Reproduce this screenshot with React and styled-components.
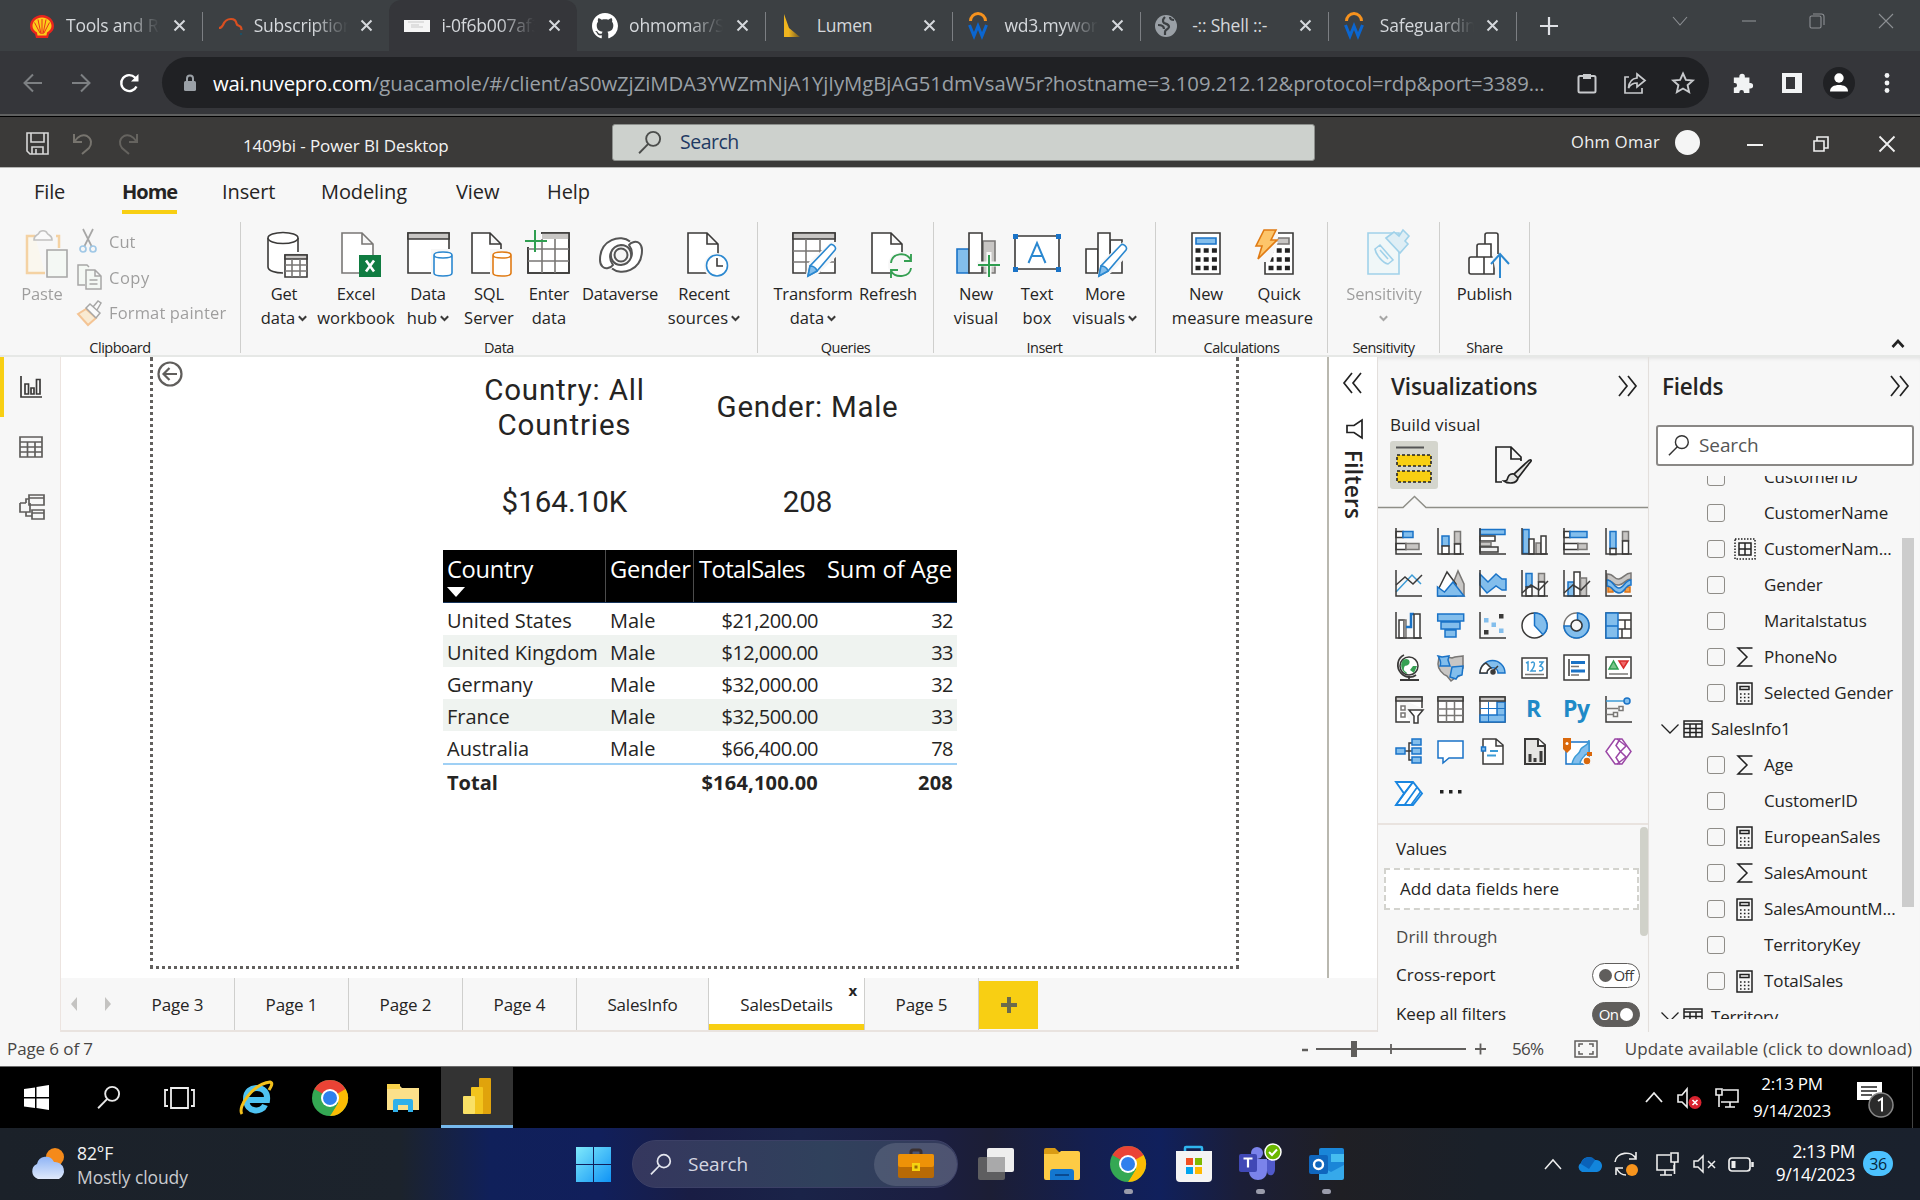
import React from "react";
import styled, { createGlobalStyle, css } from "styled-components";

const Global = createGlobalStyle`
  *, *::before, *::after { box-sizing: border-box; }
  html, body { margin: 0; padding: 0; }
  body { width: 1920px; height: 1200px; overflow: hidden; background: #000;
    font-family: "Open Sans", "Noto Sans", sans-serif; color: #252423; }
  svg { display: block; flex: none; overflow: visible; }
`;

const DARK = "#3b3a39";
const GREY = "#c8c6c4";
const MID = "#797775";
const BLUE = "#1a73c7";
const SKY = "#83beec";
const YELLOW = "#f8cf13";

const Screen = styled.div`
  width: 1920px; height: 1200px; display: flex; flex-direction: column; overflow: hidden;
`;

/* ---------- shared ---------- */
const Slot = styled.div`
  width: ${(p) => p.$w}px; flex: none; height: 100%;
  display: flex; align-items: center; justify-content: ${(p) => p.$align || "center"};
  padding-left: ${(p) => p.$pl || 0}px; padding-top: ${(p) => p.$pt || 0}px;
`;
const Label = styled.span`
  font-size: ${(p) => p.$size || 17}px; letter-spacing: ${(p) => p.$ls ?? -0.3}px;
  color: ${(p) => p.$color || "#252423"}; font-weight: ${(p) => p.$weight || 400};
  white-space: pre; line-height: 1.3;
`;

/* ---------- browser ---------- */
const TabStrip = styled.div`
  height: 51px; background: #3c4043; display: flex; padding-left: 14px; flex: none;
`;
const BrowserTab = styled.div`
  width: 187.7px; height: 51px; flex: none; display: flex; align-items: center; padding-left: 15px;
  border-radius: 12px 12px 0 0; position: relative;
  background: ${(p) => (p.$active ? "#35363a" : "transparent")};
  &::after { content: ""; position: absolute; right: -1px; top: 12px; width: 1px; height: 29px;
    background: ${(p) => (p.$sep ? "#7c7f83" : "transparent")}; }
`;
const TabIcon = styled.div`width: 26px; height: 26px; flex: none;`;
const TabTitle = styled.div`
  margin-left: 11px; width: 94px; flex: none; overflow: hidden; white-space: nowrap; margin-top: -1px;
  font-size: 17.5px; letter-spacing: -0.2px; color: #d5d8dc;
  mask-image: ${(p) => (p.$fade ? "linear-gradient(90deg,#000 62%,transparent 100%)" : "none")};
`;
const TabClose = styled.div`width: 30px; display: flex; justify-content: center; margin-left: 4px;`;
const Spacer = styled.div`flex: 1;`;

const Toolbar = styled.div`
  height: 63px; background: #35363a; display: flex; align-items: center; padding-left: 9px; flex: none;
`;
const UrlBar = styled.div`
  width: 1547px; height: 51px; border-radius: 26px; background: #202124; margin-left: 9px; flex: none;
  display: flex; align-items: center;
`;
const UrlText = styled.div`
  width: 1350px; font-size: 20.3px; letter-spacing: -0.07px; color: #9aa0a6; white-space: nowrap;
  b { font-weight: 400; color: #fff; letter-spacing: -0.25px; }
`;
const Edge = styled.div`height: 3px; background: #5f6060; border-bottom: 1px solid #000; flex: none;`;

/* ---------- report window ---------- */
const TitleBar = styled.div`
  height: 51px; flex: none; background: #3b3a39; border-bottom: 1px solid #b5b5b4; display: flex; align-items: center;
`;
const TitleSearch = styled.div`
  width: 703px; height: 37px; flex: none; background: #cdd1cd; border: 1px solid #8c8f8c; border-radius: 3px;
  display: flex; align-items: center; padding-left: 24px; gap: 18px;
`;
const Ribbon = styled.div`
  height: 189px; flex: none; background: #f7f7f7; border-bottom: 2px solid #e6e8e6; display: flex; flex-direction: column;
`;
const RibbonTabs = styled.div`height: 54px; display: flex; padding-left: 34px; flex: none;`;
const RibbonTab = styled.div`
  width: ${(p) => p.$w}px; flex: none;
  span { display: inline-block; height: 46px; padding-top: 10px; font-size: 20px; line-height: 28px;
    letter-spacing: ${(p) => p.$ls || 0}px; font-weight: ${(p) => (p.$on ? 700 : 400)};
    border-bottom: ${(p) => (p.$on ? `4px solid ${YELLOW}` : "none")}; }
`;
const RibbonBody = styled.div`display: flex; height: 131px; flex: none;`;
const Group = styled.div`
  width: ${(p) => p.$w}px; flex: none; border-right: 1px solid #cfcfcd; display: flex; flex-direction: column;
`;
const GroupItems = styled.div`display: flex; height: 116px; flex: none; padding-left: ${(p) => p.$pl}px;`;
const GroupName = styled.div`
  text-align: center; font-size: 14.5px; letter-spacing: -0.5px; line-height: 20px; height: 15px; color: #252423;
`;
const Command = styled.div`
  width: ${(p) => p.$w}px; flex: none; display: flex; flex-direction: column; align-items: center; padding-top: 8px;
  opacity: ${(p) => (p.$off ? 0.42 : 1)};
`;
const CommandText = styled.div`
  margin-top: 4px; font-size: 16.5px; line-height: 24px; letter-spacing: -0.15px; white-space: nowrap;
  display: flex; flex-direction: column; align-items: center; color: #252423;
  div { display: flex; align-items: center; gap: 3px; height: 24px; }
  div + div { letter-spacing: 0.1px; }
`;
const ClipRows = styled.div`display: flex; flex-direction: column; padding-top: 2px; opacity: 0.42;`;
const ClipRow = styled.div`
  height: 35.6px; display: flex; align-items: center; gap: 7px; font-size: 16.5px; letter-spacing: ${(p) => p.$ls || 0}px; white-space: nowrap;
`;

const Work = styled.div`height: 675px; flex: none; display: flex; background: #f7f7f7;`;
const Rail = styled.div`
  width: 61px; flex: none; border-right: 1px solid #ece4e0; display: flex; flex-direction: column;
`;
const RailItem = styled.div`
  height: 60px; display: flex; align-items: center; padding-left: ${(p) => (p.$on ? 16 : 19)}px;
  border-left: ${(p) => (p.$on ? `4px solid ${YELLOW}` : "none")};
`;
const Center = styled.div`width: 1317px; flex: none; display: flex; flex-direction: column; border-right: 1px solid #e3dfdc;`;
const CanvasRow = styled.div`height: 621px; display: flex; background: #fff; flex: none;`;
const Canvas = styled.div`width: 1268px; flex: none; border-right: 2px solid #b9b8af; padding-left: 89px;`;
const Page = styled.div`
  width: 1089px; height: 612px; border: 3px dotted #62605e; border-top: none; position: relative; padding-left: 290px;
`;
const BackButton = styled.div`position: absolute; left: 4px; top: 4px;`;
const Cards = styled.div`display: grid; grid-template-columns: 243px 243px; grid-template-rows: 101px 89px;`;
const Card = styled.div`
  display: flex; align-items: center; justify-content: center; text-align: center;
  font-family: Roboto, sans-serif; font-size: 29.5px; line-height: 34.5px; letter-spacing: ${(p) => p.$ls || 0}px; color: #252423; white-space: pre;
`;
const Table = styled.div`width: 514px; margin-top: 3px;`;
const Cells = styled.div`
  display: grid; grid-template-columns: 163px 88px 128px 135px; white-space: nowrap;
`;
const Head = styled(Cells)`
  height: 53px; background: #000; border-bottom: 1px solid #17355c; color: #fff; font-size: 23.7px; letter-spacing: -0.3px;
  > div { padding: 2px 5px 0 4px; line-height: 34px; border-right: 1px solid #4c4c4c; }
  > div:nth-child(3), > div:nth-child(4) { border-right: none; }
  > div:nth-child(3) { padding-left: 5px; letter-spacing: -0.55px; }
  > div:nth-child(4) { text-align: right; letter-spacing: 0; }
  svg { margin-top: 1px; }
`;
const Row = styled(Cells)`
  height: 32.1px; background: ${(p) => (p.$alt ? "#eff3f0" : "#fff")}; font-size: 20px; letter-spacing: 0;
  font-weight: ${(p) => (p.$total ? 700 : 400)};
  border-top: ${(p) => (p.$total ? "2px solid #9fd0f5" : "none")};
  > div { padding: 3px 4px 0; line-height: 29px; }
  > div:nth-child(n+3) { text-align: right; letter-spacing: ${(p) => (p.$total ? "0.2px" : "-0.55px")}; }
`;
const FiltersPane = styled.div`width: 49px; display: flex; flex-direction: column; align-items: center; padding-top: 15px;`;
const Funnel = styled.div`margin: 25px 0 0 3px;`;
const VerticalText = styled.div`
  writing-mode: vertical-rl; font-size: 22.5px; line-height: 24px; font-weight: 600; margin-top: 11px; letter-spacing: 0.3px;
`;

const PageTabs = styled.div`height: 54px; display: flex; border-bottom: 2px solid #e9e3df; flex: none;`;
const PageTab = styled.div`
  width: ${(p) => p.$w}px; flex: none; display: flex; align-items: center; justify-content: center; position: relative;
  border-right: 1px solid #cfcfcd; font-size: 17px; letter-spacing: ${(p) => p.$ls ?? -0.35}px;
  ${(p) => p.$on && css`background: #fff; box-shadow: inset 0 -6px ${YELLOW};`}
  sup { position: absolute; right: 7px; top: 3px; font-size: 15px; font-weight: 700; line-height: 18px; }
`;
const AddPage = styled.div`
  width: 59px; height: 48px; margin-top: 3px; background: ${YELLOW}; display: flex; align-items: center; justify-content: center;
`;

const Viz = styled.div`width: 271px; flex: none; border-right: 1px solid #e3dfdc; display: flex; flex-direction: column; box-shadow: inset 0 4px 4px -3px #ddd;`;
const PaneTitle = styled.div`
  height: 46px; margin-top: 6px; display: flex; align-items: center; justify-content: space-between; padding: 0 10px 0 13px;
  font-size: 22.5px; font-weight: 600; letter-spacing: -0.2px; flex: none;
`;
const Modes = styled.div`display: flex; gap: 52px; padding-left: 12px; height: 55px; flex: none;`;
const Mode = styled.div`
  width: 48px; height: 48px; border-radius: 3px; display: flex; align-items: center; justify-content: center;
  background: ${(p) => (p.$on ? "#d4d5cd" : "transparent")};
`;
const IconGrid = styled.div`
  display: grid; grid-template-columns: repeat(6, 42px); grid-auto-rows: 42px; padding: 20px 0 0 17px; height: 315px; flex: none;
`;
const Wells = styled.div`
  height: 208px; border-top: 2px solid #e9e3df; flex: none; display: flex; overflow: hidden;
`;
const WellList = styled.div`width: 262px; padding-left: 6px; display: flex; flex-direction: column;`;
const WellRow = styled.div`
  height: ${(p) => p.$h}px; display: flex; align-items: center; justify-content: space-between; padding-left: 12px; flex: none;
  padding-top: ${(p) => p.$pt || 0}px;
`;
const Drop = styled.div`
  height: 42px; width: 255px; background: #fff; border: 2px dashed #d3d3ce; display: flex; align-items: center; padding-left: 14px; flex: none;
`;
const Thumb = styled.div`width: ${(p) => p.$w}px; height: ${(p) => p.$h}px; background: ${(p) => p.$c}; border-radius: ${(p) => p.$r || 0}px; margin-top: ${(p) => p.$mt}px;`;
const Toggle = styled.div`
  width: 48px; height: 25px; border-radius: 13px; border: 1.5px solid #605e5c; display: flex; align-items: center; justify-content: center; gap: 2px;
  background: ${(p) => (p.$on ? "#605e5c" : "#fff")}; color: ${(p) => (p.$on ? "#fff" : "#3b3a39")};
  flex-direction: ${(p) => (p.$on ? "row" : "row-reverse")}; font-size: 15px; letter-spacing: -0.6px;
  i { width: 13px; height: 13px; border-radius: 50%; background: ${(p) => (p.$on ? "#fff" : "#605e5c")}; }
`;

const Fields = styled.div`width: 271px; flex: none; display: flex; flex-direction: column; box-shadow: inset 0 4px 4px -3px #ddd;`;
const FieldSearch = styled.div`
  width: 258px; height: 41px; margin: 16px 0 0 7px; border: 2px solid #8a8886; border-radius: 3px; background: #fff; flex: none;
  display: flex; align-items: center; padding-left: 9px; gap: 9px;
`;
const FieldArea = styled.div`height: 543px; margin-top: 10px; display: flex; overflow: hidden; flex: none;`;
const FieldList = styled.div`width: 253px; display: flex; flex-direction: column; margin-top: -17px; flex: none;`;
const FieldRow = styled.div`height: 36px; flex: none; display: flex; align-items: center; padding-left: ${(p) => (p.$table ? 12 : 58)}px;`;
const Check = styled.div`width: 18px; height: 18px; border: 1.5px solid #8f8d88; border-radius: 3px; flex: none;`;
const FieldIcon = styled.div`width: 39px; display: flex; justify-content: center; padding-right: 0; flex: none;`;

const Status = styled.div`
  height: 35px; flex: none; background: #f7f7f7; border-bottom: 1px solid #6b6b6b; display: flex; align-items: center; padding: 0 8px 0 7px;
`;

/* ---------- taskbars ---------- */
const RemoteBar = styled.div`height: 61px; flex: none; background: #000; display: flex; align-items: center;`;
const AppTile = styled.div`
  width: 72px; height: 61px; flex: none; display: flex; align-items: center; justify-content: center;
  background: ${(p) => (p.$on ? "#333" : "transparent")}; border-bottom: ${(p) => (p.$on ? "3px solid #76b9ed" : "3px solid transparent")};
`;
const Clock = styled.div`
  width: ${(p) => p.$w}px; flex: none; text-align: ${(p) => p.$align}; color: #fff; font-size: ${(p) => p.$size}px; line-height: ${(p) => p.$lh}px;
  letter-spacing: ${(p) => p.$ls}px; white-space: nowrap; margin-top: -2px;
`;
const HostBar = styled.div`
  height: 72px; flex: none; display: flex; align-items: center;
  background: linear-gradient(90deg, #1b2129 0, #1c232c 400px, #10205a 490px, #111f5b 600px, #191d44 690px, #1a2348 800px, #1b1e40 940px, #1c1e35 990px, #141f50 1090px, #10205c 1160px, #1b1e38 1240px, #1f1f24 1340px, #1a2029 1480px, #1a212d 100%);
`;
const Weather = styled.div`width: 541px; display: flex; align-items: center; gap: 11px; flex: none;`;
const WeatherText = styled.div`color: #f3f3f3; font-size: 17.5px; line-height: 24px; letter-spacing: -0.1px; margin-top: 2px; div + div { color: #c9cbcf; }`;
const SearchPill = styled.div`
  width: 326px; height: 48px; border-radius: 24px; flex: none; margin: 0 5px 0 17px; display: flex; align-items: center;
  background: linear-gradient(90deg, #35375e, #30415c 60%, #343a5c); border: 1px solid #3c4066; padding-left: 16px;
`;
const Highlight = styled.div`
  width: 84px; height: 43px; border-radius: 22px; background: rgba(255,255,255,.13); display: flex; align-items: center; justify-content: center;
`;
const HostApp = styled.div`
  width: 66px; height: 72px; flex: none; display: flex; flex-direction: column; align-items: center; justify-content: center; position: relative;
  &::after { content: ""; position: absolute; bottom: 6px; width: 9px; height: 5px; border-radius: 3px; background: ${(p) => (p.$run ? "#9a9cab" : "transparent")}; }
`;
const Count = styled.div`
  width: 30px; height: 25px; border-radius: 13px; background: #4cc2ff; color: #06263a; font-size: 16px; letter-spacing: -0.4px;
  display: flex; align-items: center; justify-content: center; margin: -1px 0 0 8px;
`;

/* ---------- drawing helper ---------- */
const S = ({ w = 24, h, vb, c = "none", s = "none", sw = 1.5, children }) => (
  <svg width={w} height={h || w} viewBox={vb || `0 0 ${w} ${h || w}`} fill={c} stroke={s} strokeWidth={sw}>{children}</svg>
);
const X = ({ n = 11, s = "#d5d8dc", sw = 2 }) => <S w={n} s={s} sw={sw}><path d={`M0.5 0.5L${n - 0.5} ${n - 0.5}M${n - 0.5} 0.5L0.5 ${n - 0.5}`} /></S>;
const Lens = ({ n = 24, s = "#444", sw = 1.8 }) => <S w={n} vb="0 0 24 24" s={s} sw={sw}><circle cx="15.5" cy="8.5" r="6.7" /><path d="M10.8 13.3L2 22.3" /></S>;
const Down = ({ s = DARK }) => <S w={9} h={7} s={s} sw={2}><path d="M0.8 1.2L4.5 5L8.2 1.2" /></S>;

/* ---------- browser icons ---------- */
const ShellLogo = () => <S w={26}><path d="M13 2C20 2 25 7 25 13c0 4-2 6-5 8l-1 4H7l-1-4c-3-2-5-4-5-8C1 7 6 2 13 2z" fill="#e8251d" /><path d="M13 4.500c5.500 0 9.500 4 9.500 8.500 0 3-2 5-4.500 6.500l-.5 3h-9l-.5-3C5.500 18 3.500 16 3.500 13c0-4.500 4-8.500 9.500-8.500z" fill="#fccb1a" /><path d="M13 6v15M9 6.500l3 14.500M17 6.500L14 21M5.500 9.500L11 20M20.500 9.500L15 20" stroke="#e8251d" strokeWidth=".9" /></S>;
const Arc = () => <S w={26} s="#d94f20" sw={2.200}><path d="M2 15c2 0 3-1 4-3 1.500-4 4-6 8-6 3 0 5 1.500 5.500 4.500.3 2 1.500 2 3 2.500 1.500.5 2 1.500 2 4" /><path d="M24 20v2" stroke="#1d5065" /></S>;
const Remote = () => <S w={26}><rect x="0" y="7" width="26" height="12" fill="#f5f5f5" /><path d="M7 12h8M7 14h12M4 9h16" stroke="#c9c9c9" strokeWidth="1" /></S>;
const GitHub = () => <S w={26} vb="0 0 16 16" c="#fff"><path d="M8 0C3.580 0 0 3.580 0 8c0 3.540 2.290 6.530 5.470 7.590.4.070.55-.17.55-.38 0-.19-.01-.82-.01-1.490-2.010.37-2.530-.49-2.690-.94-.09-.23-.48-.94-.82-1.130-.28-.15-.68-.52-.01-.53.63-.01 1.080.58 1.230.82.72 1.210 1.870.87 2.330.66.070-.52.28-.87.51-1.070-1.780-.2-3.640-.89-3.640-3.950 0-.87.31-1.590.82-2.150-.08-.2-.36-1.020.08-2.120 0 0 .67-.21 2.200.82.64-.18 1.320-.27 2-.27s1.360.09 2 .27c1.530-1.040 2.200-.82 2.200-.82.44 1.100.16 1.920.08 2.120.51.56.82 1.270.82 2.150 0 3.070-1.870 3.750-3.650 3.950.29.25.54.73.54 1.480 0 1.070-.01 1.930-.01 2.200 0 .21.15.46.55.38A8.010 8.010 0 0016 8c0-4.420-3.580-8-8-8z" /></S>;
const LumenLogo = () => <S w={26}><defs><linearGradient id="lum"><stop offset=".3" stopColor="#f0b51e" /><stop offset="1" stopColor="#6b5523" /></linearGradient></defs><path d="M4 1l5 14 11 9H4z" fill="url(#lum)" /></S>;
const Workday = () => <S w={22} h={26}><path d="M3.500 8a7.500 7.500 0 0115 0" stroke="#f6921e" strokeWidth="3" /><path d="M2.500 12L7 23l4-10 4 10 4.500-11" stroke="#0b66d0" strokeWidth="3" /></S>;
const Globe = () => <S w={24} h={26}><circle cx="11" cy="13" r="11" fill="#9aa0a6" /><path d="M10 4c-2 2-3 4-1 6 2 1 5 1 5 4-1 3-4 2-4 5v3M3 12c3 0 6 1 6 4M15 4c0 2 1 3 4 3" stroke="#3c4043" strokeWidth="2.200" /></S>;

const tabs = [
  [<ShellLogo />, "Tools and Resources", 1, 1], [<Arc />, "Subscriptions", 1, 0], [<Remote />, "i-0f6b007af3", 1, 0],
  [<GitHub />, "ohmomar/Shell", 1, 1], [<LumenLogo />, "Lumen", 0, 1], [<Workday />, "wd3.myworkday", 1, 1],
  [<Globe />, "-:: Shell ::-", 0, 1], [<Workday />, "Safeguarding", 1, 1],
];

function Browser() {
  return (
    <>
      <TabStrip>
        {tabs.map(([icon, title, fade, sep], i) => (
          <BrowserTab key={i} $active={i === 2} $sep={sep}>
            <TabIcon>{icon}</TabIcon><TabTitle $fade={fade}>{title}</TabTitle><TabClose><X /></TabClose>
          </BrowserTab>
        ))}
        <Slot $w={66}><S w={18} s="#dfe1e5" sw={2.200}><path d="M9 0v18M0 9h18" /></S></Slot>
        <Spacer />
        {[<path d="M1 4l7 8 7-8" />, <path d="M1 8h14" />, <path d="M1 4.500a1.500 1.500 0 011.500-1.500h8A1.500 1.500 0 0112 4.500v9a1.500 1.500 0 01-1.500 1.500h-8A1.500 1.500 0 011 13.500zM4 1h8.500A2.500 2.500 0 0115 3.500V12" />, <path d="M1 1l14 14M15 1L1 15" />].map((d, i) => (
          <Slot key={i} $w={68.500}><S w={16} h={25} s="#8d9094" sw={1.100}>{d}</S></Slot>
        ))}
      </TabStrip>
      <Toolbar>
        <Slot $w={48}><S w={20} s="#7d8083" sw={2}><path d="M19 10H2M10 1.500L1.500 10l8.500 8.500" /></S></Slot>
        <Slot $w={48}><S w={20} s="#7d8083" sw={2}><path d="M1 10h17M10 1.500l8.500 8.500-8.500 8.500" /></S></Slot>
        <Slot $w={48}><S w={20} s="#fff" sw={2.400}><path d="M17.500 13.500A8 8 0 1116 4.500L18 7" /><path d="M19.500 1v7.500h-7.500z" fill="#fff" stroke="none" /></S></Slot>
        <UrlBar>
          <Slot $w={51} $pl={4}><S w={14} h={18}><rect x="1" y="7" width="12" height="10" rx="1.500" fill="#9aa0a6" /><path d="M4 7V4.500a3 3 0 016 0V7" stroke="#9aa0a6" strokeWidth="2" /></S></Slot>
          <UrlText><b>wai.nuvepro.com</b>/guacamole/#/client/aS0wZjZiMDA3YWZmNjA1YjIyMgBjAG51dmVsaW5r?hostname=3.109.212.12&amp;protocol=rdp&amp;port=3389...</UrlText>
          <Slot $w={48}><S w={20} h={22} s="#c8cacd" sw={2}><rect x="1.500" y="4" width="17" height="16.500" rx="1.500" /><path d="M6 2h8v5H6z" fill="#c8cacd" stroke="none" /></S></Slot>
          <Slot $w={48}><S w={24} h={22} s="#c8cacd" sw={1.700}><path d="M6 5H2v16h17v-5" /><path d="M14 2l8 6.500L14 15v-4c-4 0-6.500 1.500-8.500 5 .5-6 3.500-9.500 8.500-10z" /></S></Slot>
          <Slot $w={48}><S w={22} s="#c8cacd" sw={1.900}><path d="M11 1.500l2.900 6.400 6.900.7-5.200 4.600 1.500 6.800-6.100-3.500L4.900 20l1.500-6.800L1.200 8.600l6.900-.7z" /></S></Slot>
        </UrlBar>
        <Slot $w={67}><S w={22} vb="0 0 24 24" c="#f1f3f4"><path d="M2 6h6V5a3 3 0 016 0v1h5v6h1a3 3 0 010 6h-1v5h-6v-1a2.500 2.500 0 00-5 0v1H2v-6h1a2.500 2.500 0 000-5H2z" /></S></Slot>
        <Slot $w={31}><S w={22}><path d="M1 1h20v20H1zM5 5v12h9V5z" fill="#f1f3f4" fillRule="evenodd" /></S></Slot>
        <Slot $w={64}><S w={32}><circle cx="16" cy="16" r="16" fill="#202124" /><circle cx="16" cy="11" r="4.700" fill="#fff" /><path d="M7 24.500c0-4.500 4-6.500 9-6.500s9 2 9 6.500z" fill="#fff" /></S></Slot>
        <Slot $w={32}><S w={6} h={20} c="#f1f3f4"><circle cx="3" cy="2.500" r="2.400" /><circle cx="3" cy="10" r="2.400" /><circle cx="3" cy="17.500" r="2.400" /></S></Slot>
      </Toolbar>
      <Edge />
    </>
  );
}

function TitleStrip() {
  return (
    <TitleBar>
      <Slot $w={75} $pt={3}><S w={23} s="#d8d8d8" sw={1.600}><path d="M1 1h21v21H4l-3-3z" /><path d="M5 1v9h13V1M6 22v-7h11v7M10 17v5" /></S></Slot>
      <Slot $w={15} $pt={3}><S w={20} h={22} s="#77746e" sw={2}><path d="M1 1v8h8M1.500 8.500C5 3 10 1 14 3c5 3 5 8 2 12l-7 6" /></S></Slot>
      <Slot $w={75} $pt={3}><S w={20} h={22} s="#65635f" sw={2}><path d="M19 1v8h-8M18.500 8.500C15 3 10 1 6 3 1 6 1 11 4 15l7 6" /></S></Slot>
      <Slot $w={447} $align="flex-start" $pl={78} $pt={8}><Label $size={17} $color="#f3f3f3" $ls={-0.1}>1409bi - Power BI Desktop</Label></Slot>
      <TitleSearch><Lens n={25} s="#4b4d4b" /><Label $size={19.500} $color="#1f3a63" $ls={-0.5}>Search</Label></TitleSearch>
      <Slot $w={345} $align="flex-end"><Label $size={16.500} $color="#f0f0f0" $ls={0.3}>Ohm Omar</Label></Slot>
      <Slot $w={54}><S w={25}><circle cx="12.500" cy="12.500" r="12.500" fill="#f5f5f5" /></S></Slot>
      <Slot $w={82} $pt={3}><S w={16} s="#f0f0f0"><path d="M0 9h16" strokeWidth="2" /></S></Slot>
      <Slot $w={50} $pt={3}><S w={16} s="#f0f0f0" sw={1.600}><path d="M1 5h10v10H1zM4 5V1h11v11h-4" /></S></Slot>
      <Slot $w={82} $pt={3}><X n={16} s="#f0f0f0" sw={1.800} /></Slot>
    </TitleBar>
  );
}

/* ---------- ribbon icons, 48 x 48 ---------- */
const W = "#fff";
const I = ({ children }) => <S w={48} s={DARK} sw={1.600}>{children}</S>;
const Cyl = ({ x, y, w, h, s }) => <path d={`M${x} ${y + 3}v${h - 6}c0 4 ${w} 4 ${w} 0v${-(h - 6)}c0 -4 ${-w} -4 ${-w} 0c0 4 ${w} 4 ${w} 0`} fill={W} stroke={s} />;
const Pencil = ({ x, y }) => <g transform={`translate(${x} ${y})`} stroke="#2b88d0"><path d="M0 32l2-10L22 1c2-2 7 2 5 5L9 27z" fill={W} /><path d="M0 32l2-10c4 0 6 2 7 5z" fill={SKY} /></g>;
const GetIcon = () => <I><path d="M8 8v29c0 5 20 5 31 2V8" fill={W} stroke="none" /><path d="M8 8v29c0 4 8 6 15 6M38 8v14" /><ellipse cx="23" cy="8" rx="15" ry="5.500" fill={W} /><path d="M25 23h22v25H25z" fill="#f7f7f7" stroke="none" /><path d="M25 25h22v22H25z" fill={W} /><path d="M25 25h22v4H25z" fill={GREY} /><path d="M25 35h22M25 41h22M32 29v18M40 29v18" stroke={MID} /></I>;
const ExcelIcon = () => <I><path d="M10 3h20l11 11v29H10z M30 3v11h11" fill={W} stroke={MID} /><rect x="27" y="25" width="22" height="22" fill="#107c41" stroke="none" /><path d="M34 30.500l8 11M42 30.500l-8 11" stroke={W} strokeWidth="2.600" /></I>;
const HubIcon = () => <I><path d="M4 3h41v40H4z" fill={W} /><path d="M4 3h41v6H4z" fill={GREY} /><rect x="27" y="19" width="22" height="30" fill="#f7f7f7" stroke="none" /><Cyl x={30} y={22} w={18} h={24} s="#2b88d0" /></I>;
const SqlIcon = () => <I><path d="M7 3h18l11 11v29H7z M25 3v11h11" fill={W} /><rect x="25" y="19" width="23" height="30" fill="#f7f7f7" stroke="none" /><Cyl x={28} y={22} w={18} h={24} s="#e07b14" /></I>;
const EnterIcon = () => <I><path d="M3 3h41v40H3z" fill={W} /><path d="M17 3h27v6H17z" fill={GREY} stroke="none" /><path d="M3 3h41v40H3z" /><path d="M3 19h41M3 31h41M17 9v34M30 9v34" stroke={MID} /><path d="M-1 -1h17v18H-1z" fill="#f7f7f7" stroke="none" /><path d="M10 0v22M0 11h22" stroke="#2f9e50" strokeWidth="2" /></I>;
const swirl = "M34 11.500C25 4 4 9 4 30c0 6 4 9 8 8 2-.5 4-1.500 5-3-6-8-2-19 8-20 8 0 11 7 10 12";
const VerseIcon = () => <S w={48} s="#555" sw={2}><path d={swirl} fill={W} stroke="none" /><path d={swirl} fill={W} stroke="none" transform="rotate(180 25 25)" /><path d={swirl} /><path d={swirl} transform="rotate(180 25 25)" /><circle cx="25" cy="25" r="6.500" fill="#f7f7f7" /></S>;
const RecentIcon = () => <I><path d="M8 3h19l11 11v29H8z M27 3v11h11" fill={W} /><circle cx="37" cy="36" r="13" fill="#f7f7f7" stroke="none" /><circle cx="37" cy="35.500" r="10.500" fill={W} stroke="#2b88d0" /><path d="M37 28v8h6" /></I>;
const TransformIcon = () => <I><path d="M4 3h42v40H4z" fill={W} /><path d="M4 3h42v6H4z" fill={GREY} /><path d="M4 21h42M4 32h42M17 9v34M31 9v34" stroke={MID} /><path d="M16 48l4-16 22-20h8v12L28 45z" fill="#f7f7f7" stroke="none" /><Pencil x={19} y={14} /></I>;
const RefreshIcon = () => <I><path d="M8 3h19l11 11v29H8z M27 3v11h11" fill={W} /><circle cx="37" cy="35" r="13" fill="#f7f7f7" stroke="none" /><path d="M27 33c1-10 15-12 20-3M47 24v7h-7M47 38c-1 9-15 11-20 3M27 48v-8h7" stroke="#36a053" strokeWidth="1.900" /></I>;
const NewVisual = () => <I><path d="M31 11h12v32H31z" fill={GREY} stroke={MID} /><path d="M5 19h12v24H5z" fill={SKY} stroke={BLUE} /><path d="M17 3h13v40H17z" fill={W} /><path d="M25 34h24M37 22v26" stroke="#f7f7f7" strokeWidth="5" /><path d="M26 35h22M37 25v22" stroke="#2f9e50" strokeWidth="2" /></I>;
const TextBoxIcon = () => <I><path d="M2 6h44v33H2z" fill={W} /><path d="M15.500 33L24 13l8.500 20M18.500 26h11" stroke="#2b88d0" strokeWidth="2" /><path d="M0 4h5v5H0zM43 4h5v5h-5zM0 37h5v5H0zM43 37h5v5h-5z" fill={BLUE} stroke="none" /></I>;
const MoreVisual = () => <I><path d="M29 10h12v33H29z" fill={W} /><path d="M5 19h12v24H5z" fill={W} /><path d="M17 3h12v40H17z" fill={W} /><path d="M16 48l4-16 22-20h6v12L28 45z" fill="#f7f7f7" stroke="none" /><Pencil x={18} y={14} /></I>;
const Dots = ({ x }) => <path d={`M${x} 20.500h22M${x} 29.500h22M${x} 38h22`} stroke="#222" strokeWidth="4.500" strokeDasharray="5 3.200" />;
const MeasureIcon = () => <I><path d="M10 3h28v41H10z" fill={W} /><path d="M14 8h20v6H14z" fill={SKY} stroke={BLUE} /><Dots x={13.500} /></I>;
const QuickIcon = () => <I><path d="M10 3h28v41H10z" fill={W} /><path d="M20 8h14v6H18z" fill={GREY} stroke={MID} /><Dots x={13.500} /><path d="M8-2h15v10l-2 4h2l-8 20H0V8z" fill="#f7f7f7" stroke="none" /><path d="M9 0h12l-5 10h6L3 29l4-13H1z" fill="#fdc56a" stroke="#e07b14" /></I>;
const SensIcon = () => <S w={48} s="#2b9fd8" sw={1.600}><path d="M8 3h31v41H8z" fill="#e8f7fb" /><path d="M15 19l5-4 13 15-5 4c-5-1-12-9-13-15zM20 20l8 9" /><path d="M26 8l8-6 5 4 4-6 6 6-4 5 3 3-8 9z" fill="#bfe3f3" /></S>;
const PublishIcon = () => <I><path d="M8 29a2 2 0 012-2h13v17H10a2 2 0 01-2-2zM16 27V16a2 2 0 012-2h12v13M23 27h10v17H23M24 14V5a2 2 0 012-2h9a2 2 0 012 2v22" fill={W} /><path d="M31 24h9v24h-4z" fill="#f7f7f7" stroke="none" /><path d="M39 48V25M30 34l9-10 9 10" stroke="#2b88d0" strokeWidth="2" /></I>;

const groups = [
  ["Data", 517, 9, [[68, <GetIcon />, "Get", "data", 1], [76, <ExcelIcon />, "Excel", "workbook"], [68, <HubIcon />, "Data", "hub", 1], [54, <SqlIcon />, "SQL", "Server"], [66, <EnterIcon />, "Enter", "data"], [76, <VerseIcon />, "Dataverse"], [92, <RecentIcon />, "Recent", "sources", 1]]],
  ["Queries", 176, 9, [[92, <TransformIcon />, "Transform", "data", 1], [58, <RefreshIcon />, "Refresh"]]],
  ["Insert", 222, 12, [[60, <NewVisual />, "New", "visual"], [62, <TextBoxIcon />, "Text", "box"], [74, <MoreVisual />, "More", "visuals", 1]]],
  ["Calculations", 172, 14, [[72, <MeasureIcon />, "New", "measure"], [74, <QuickIcon />, "Quick", "measure"]]],
  ["Sensitivity", 112, 0, [[112, <SensIcon />, "Sensitivity", "", 1, 1]]],
  ["Share", 90, 0, [[89, <PublishIcon />, "Publish"]]],
];

function RibbonArea() {
  return (
    <Ribbon>
      <RibbonTabs>
        {[["File", 88], ["Home", 100, 1], ["Insert", 99], ["Modeling", 135], ["View", 91], ["Help", 60]].map(([t, w, on]) => (
          <RibbonTab key={t} $w={w} $on={on} $ls={on ? -1 : -0.1}><span>{t}</span></RibbonTab>
        ))}
      </RibbonTabs>
      <RibbonBody>
        <Group $w={241}>
          <GroupItems $pl={9}>
            <Command $w={66} $off>
              <I><path d="M17 6H9v37h18" fill="#fff8e4" stroke="#f0a030" strokeWidth="2.500" /><path d="M38 6h3v12" stroke="#f0a030" strokeWidth="2.500" /><path d="M16 10c0-6 4-4 5-7 1-3 7-3 8 0 1 3 5 1 5 7z" fill={W} stroke={MID} /><path d="M29 20h20v27H29z" fill="#f0fbf2" stroke={DARK} /></I>
              <CommandText>Paste</CommandText>
            </Command>
            <ClipRows>
              <ClipRow><S w={27} h={26} s={DARK} sw={1.700}><path d="M8 0l9 18M18 0l-9 18" /><circle cx="8" cy="20" r="3" stroke="#2b88d0" /><circle cx="18" cy="20" r="3" stroke="#2b88d0" /></S>Cut</ClipRow>
              <ClipRow $ls={0.5}><S w={27} h={26} s={DARK}><path d="M10 21H3V1h9l2 2" fill="#f0fbf2" /><path d="M11 6h9l6 6v13H11zM20 6v6h6M14.500 16h8M14.500 20h8" fill="#f0fbf2" /></S>Copy</ClipRow>
              <ClipRow $ls={0.15}><S w={27} h={26} s={DARK}><path d="M3 14l8-5 10 9-8 7z" fill="#fdd9a0" stroke="#f08010" strokeWidth="2" /><path d="M11 8l4-4 10 9-4 5zM18 7l5-6 3 2-4 7" fill={W} /></S>Format painter</ClipRow>
            </ClipRows>
          </GroupItems>
          <GroupName>Clipboard</GroupName>
        </Group>
        {groups.map(([name, w, pl, items]) => (
          <Group key={name} $w={w}>
            <GroupItems $pl={pl}>
              {items.map(([iw, icon, a, b, arrow, off], i) => (
                <Command key={i} $w={iw} $off={off}>{icon}<CommandText><div>{a}</div>{(b || arrow) && <div>{b}{arrow && <Down />}</div>}</CommandText></Command>
              ))}
            </GroupItems>
            <GroupName>{name}</GroupName>
          </Group>
        ))}
        <Slot $w={390} $align="flex-end" $pt={111}><Slot $w={29} $align="flex-start"><S w={14} h={9} s="#222" sw={2.600}><path d="M1.500 8L7 2l5.500 6" /></S></Slot></Slot>
      </RibbonBody>
    </Ribbon>
  );
}

/* ---------- visual gallery icons, 27 x 27 ---------- */
const V = ({ children, sw = 1.500 }) => <S w={27} s={DARK} sw={sw}>{children}</S>;
const R = ({ a, f = W, s = DARK }) => <rect x={a[0]} y={a[1]} width={a[2]} height={a[3]} fill={f} stroke={s} />;
const Axis = () => <path d="M1 0v26h26" />;
const viz = [
  <V><R a={[1, 3.500, 7, 6]} /><R a={[8, 3.500, 10, 6]} f={SKY} s={BLUE} /><R a={[1, 15.500, 10, 6]} /><R a={[11, 15.500, 13, 6]} f={GREY} s={MID} /><Axis /></V>,
  <V><R a={[5, 8, 7, 10]} f={SKY} s={BLUE} /><R a={[5, 18, 7, 8]} /><R a={[17.500, 3.500, 6, 12]} f={GREY} s={MID} /><R a={[17.500, 16, 6, 10]} /><Axis /></V>,
  <V><R a={[1, 1.500, 25, 5]} f={SKY} s={BLUE} /><R a={[1, 8, 15, 5]} /><R a={[1, 14, 11, 4]} f={GREY} s={MID} /><R a={[1, 19, 18, 5]} f="#eee" /><Axis /></V>,
  <V><R a={[2, 1.500, 6, 24]} f={SKY} s={BLUE} /><R a={[8, 11, 5, 15]} /><R a={[15, 15, 5, 11]} f={GREY} s={MID} /><R a={[20, 8, 5, 18]} /><Axis /></V>,
  <V><R a={[1, 3.500, 6, 6]} /><R a={[7, 3.500, 17, 6]} f={SKY} s={BLUE} /><R a={[1, 15.500, 14, 6]} /><R a={[15, 15.500, 9, 6]} f={GREY} s={MID} /><Axis /></V>,
  <V><R a={[5, 3.500, 6, 17]} f={SKY} s={BLUE} /><R a={[5, 20.500, 6, 6]} /><R a={[17.500, 3.500, 6, 9]} f={GREY} s={MID} /><R a={[17.500, 13, 6, 13]} /><Axis /></V>,
  <V><path d="M1 22L17 5l9 9" stroke="#3c9bd6" /><path d="M1 15l9-8 8 7 9-9" /><Axis /></V>,
  <V><path d="M11 26L21 1l6 13v12z" fill={GREY} stroke={MID} /><path d="M1 20L10 2l9 12v12H1z" fill={W} /><path d="M0.500 26V17l7 5L16 12l11 14z" fill={SKY} stroke={BLUE} /></V>,
  <V><path d="M1 4l8 8L17 4l6 5h4v11h-4l-6-4-9 7-7-8z" fill={SKY} stroke={BLUE} /><Axis /></V>,
  <V><R a={[5, 3.500, 6, 13]} f={SKY} s={BLUE} /><R a={[5, 17, 6, 9]} /><R a={[17.500, 3.500, 6, 8]} f={GREY} s={MID} /><R a={[17.500, 12, 6, 14]} /><path d="M1 23l9-8 8 5 9-9" /><Axis /></V>,
  <V><R a={[5, 12, 6, 14]} f={SKY} s={BLUE} /><R a={[11, 2, 6, 24]} /><R a={[17.500, 8, 6, 18]} f={GREY} s={MID} /><path d="M1 23l9-8 8 5 9-9" /><Axis /></V>,
  <V><R a={[3, 13, 5, 9]} f="#f5a04a" s="#d8731a" /><R a={[20, 17, 5, 5]} f="#f5a04a" s="#d8731a" /><path d="M2 4c8 0 7 6 12 5s6-6 12-6v6c-6 0-6 5-12 6S8 10 2 10z" fill={GREY} stroke={MID} /><path d="M2 10c6 0 7 8 12 8s6-8 12-8v5c-6 0-6 8-12 8S8 16 2 16z" fill={SKY} stroke={BLUE} /><Axis /></V>,
  <V><R a={[4, 8, 5, 18]} /><R a={[9, 8, 2, 18]} f={GREY} s={MID} /><path d="M11 15h5V2h3" stroke={BLUE} strokeWidth="2.500" /><R a={[19, 2, 6, 24]} /><Axis /></V>,
  <V><g fill={SKY} stroke={BLUE}><path d="M0.700 2h26v7H0.700zM4 10h19v7H4zM8 18h11v7H8z" /></g></V>,
  <V><Axis /><g stroke="none"><path d="M20 2h4.500v4.500H20zM5 18h4.500v4.500H5z" fill={DARK} /><path d="M5 6h4.500v4.500H5zM12.500 10.500H17V15h-4.500zM20 16.500h4.500V21H20z" fill={SKY} /></g></V>,
  <V><circle cx="13.500" cy="13.500" r="12.500" fill={W} /><path d="M13.500 1a12.500 12.500 0 018.500 21.700l-8.500-9.200z" fill={SKY} stroke={BLUE} /></V>,
  <V><circle cx="13.500" cy="13.500" r="12.500" fill={W} stroke={MID} /><path d="M14.500 1A12.500 12.500 0 111 14h7a5.500 5.500 0 106.500-6z" fill={SKY} stroke={BLUE} /><circle cx="13.500" cy="13.500" r="5.500" fill="#f7f7f7" /></V>,
  <V><path d="M1 1h25v25H1z" fill={W} /><path d="M13 8h13M13 17h13M20 8v9M17 17v9" /><path d="M1 1h12v25H1zM1 14h12" fill={SKY} stroke={BLUE} /></V>,
  <V><circle cx="14" cy="12" r="9" fill={W} /><path d="M8 6c5-3 8 1 6 4s-4 0-5 4 3 3 3 6c-5-2-8-9-4-14zM18 12l4 0-3 7-4-3z" fill="#36a053" stroke="none" /><path d="M9 1C2 4 1 14 6 19c4 5 11 5 15 2M14 22v4M5 26h19" strokeWidth="1.800" /></V>,
  <V><path d="M2 3c6 3 9-1 13 1 4-2 7-1 11-2v12l-3 2 1 5-6 3-4 3-4-5C5 20 1 15 1 10z" fill={GREY} stroke={MID} /><path d="M1 2l4 1 7-1-1 4 2 6H3c2-4 0-6-2-10zM15 13l11-1-1 9-4 1-2 3-6-2z" fill={SKY} stroke={BLUE} /></V>,
  <V><path d="M1 19a12.500 12.500 0 0125 0h-7c0-7-11-7-11 0z" fill={SKY} stroke={BLUE} /><path d="M1 19c0-5 3-9 6-10l5 5c-3 1-4 3-4 5zM13 18l6-6" fill={W} /><circle cx="14" cy="18" r="2" fill={DARK} /></V>,
  <V><R a={[1, 4, 25, 20]} /><path d="M5 9l2-1v9M10 9c4-3 5 2 0 8h5M18 8h4l-3 4c5 1 3 6-1 4.500" stroke="#3c9bd6" /><path d="M4 20.500h19" stroke={MID} /></V>,
  <V><R a={[1, 1, 25, 25]} /><path d="M6 5v17" /><path d="M8 8.500h14M8 17h14" stroke={BLUE} strokeWidth="3" /><path d="M8 12.500h8M8 21h8" stroke={MID} /></V>,
  <V><R a={[1, 3, 25, 21]} /><path d="M4 15l4.500-8 4.500 8z" fill="#7ac48b" stroke="#2f9e50" /><path d="M14 7h9l-4.500 7z" fill="#f06a6a" stroke="#d92c2c" /><path d="M4 20h19" stroke={MID} /></V>,
  <V><path d="M1 1h26v11M15 26H1V1" fill={W} /><R a={[1, 1, 26, 4]} f={GREY} /><R a={[6, 10, 4, 4]} s={MID} /><R a={[6, 17, 4, 4]} s={MID} /><path d="M14 14h14l-5 6v7h-4v-7z" fill={W} /></V>,
  <V><R a={[1, 1, 25, 25]} /><path d="M1 13h25M1 19.500h25M9.500 6v20M17.500 6v20" stroke={MID} /><R a={[1, 1, 25, 4]} f={GREY} /></V>,
  <V><R a={[1, 1, 25, 25]} /><path d="M18 6h8v20H1v-7h17z" fill={SKY} stroke={BLUE} /><path d="M1 12.500h25M9.500 6v20M18 19h8" stroke={BLUE} strokeWidth="1" /><R a={[1, 1, 25, 4]} f={GREY} /></V>,
  "R", "Py",
  <V><Axis /><path d="M1 5h18" stroke="#3c9bd6" /><circle cx="22" cy="5" r="3" fill={SKY} stroke={BLUE} /><path d="M1 12.500h12M1 18.500h7" stroke={MID} /><R a={[14, 10.500, 4, 4]} s={MID} /><R a={[8.500, 16.500, 4, 4]} s={MID} /></V>,
  <V><path d="M10 13h7M17 5h-3v17h3" /><g fill={SKY} stroke={BLUE}><path d="M1 10h9v6H1zM17 1h9v6h-9zM17 10h9v6h-9zM17 19h9v6h-9z" /></g></V>,
  <V><path d="M1 3h25v17H12l-6 5v-5H1z" fill={W} stroke={BLUE} /></V>,
  <V><path d="M4 26V1h13l7 6v19zM17 1v7h7" fill={W} /><R a={[2.500, 9, 4, 4]} f={SKY} s={BLUE} /><path d="M11 13h8M8 17.500h9" stroke="#3c9bd6" strokeWidth="1.800" /></V>,
  <V sw={2}><path d="M4 26V1h13l7 6v19z" fill="#e6e5e3" /><path d="M17 1v7h7" fill={W} /><path d="M9 16v8M14 20v4M20 13v11" strokeWidth="3" /></V>,
  <V><path d="M3 26V4h23v22z" fill={W} stroke={BLUE} /><path d="M26 2c0 7-8 5-9 11-1 4-6 3-8 13h8c0-5 3-5 5-9l4-2z" fill={SKY} stroke="#3c9bd6" /><path d="M0 0h8v11l-4 4-4-4z" fill="#d9680c" stroke="none" /><circle cx="4" cy="5.500" r="1.500" fill={W} stroke="none" /><circle cx="24" cy="23" r="4" fill="#d9680c" stroke="#f7f7f7" /><path d="M24 14h5v4h-5z" fill="#d9680c" stroke="none" /></V>,
  <V><g stroke="#9b47a6"><path d="M10 1h7l9 12.500L17 26h-7L1 13.500z" fill={W} /><path d="M12 1l9 7-5.500 5.500L21 19l-9 7M15 1l-4 6.500 4.500 6-4.500 6 4 6.500M21 8l-5.500 5.500" fill="none" /></g></V>,
  <V><path d="M1 2h17l9 11.500L18 25H1l8-11.500z" fill={W} stroke="#1a86e0" strokeWidth="1.900" /><path d="M9 13.500L18 2M9.500 25L22 7.500" stroke="#1a86e0" strokeWidth="1.700" /><path d="M1 25L18 2M16 25l9.500-13" stroke="#1a86e0" strokeWidth="1.700" /></V>,
  <V><g fill="#222" stroke="none"><path d="M3 10h3.500v3.500H3zM12 10h3.500v3.500H12zM21 10h3.500v3.500H21z" /></g></V>,
];
const GalleryLetter = styled.div`
  font-weight: 700; color: #1f8ac7; font-size: 23px; line-height: 24px; letter-spacing: -0.5px; padding-left: ${(p) => p.$pl}px;
`;

const Sigma = () => <S w={16} h={20} s="#222" sw={1.500}><path d="M15.500 1H1l9 9-9 9h14.500" /></S>;
const Calc = () => <S w={17} h={23} s="#222"><path d="M1 1h15v21H1zM4 4.500h9v3H4z" /><path d="M4 12h10M4 15.500h10M4 19h10" strokeDasharray="1.600 2.300" strokeWidth="1.600" /></S>;
const GridIcon = () => <S w={20} h={18} s="#222"><path d="M1 1h18v16H1zM1 4h18M1 8.500h18M1 12.500h18M7 4v13M13 4v13" /></S>;
const Hier = () => <S w={22} s="#222"><path d="M1 1h20v20H1z" strokeDasharray="1.500 1.500" /><path d="M5 5h12v12H5zM11 5v12M5 11h12" /></S>;
const Chevron = () => <S w={18} h={10} s="#222" sw={1.300}><path d="M0.500 0.500L9 9l8.500-8.500" /></S>;

const fields = [["CustomerID"], ["CustomerName"], ["CustomerNam...", "h"], ["Gender"], ["Maritalstatus"], ["PhoneNo", "s"], ["Selected Gender", "c"], ["SalesInfo1", "t"], ["Age", "s"], ["CustomerID"], ["EuropeanSales", "c"], ["SalesAmount", "s"], ["SalesAmountM...", "c"], ["TerritoryKey"], ["TotalSales", "c"], ["Territory", "t"]];
const fieldIcons = { h: <Hier />, s: <Sigma />, c: <Calc /> };
const rows = [["United States", "Male", "$21,200.00", "32"], ["United Kingdom", "Male", "$12,000.00", "33"], ["Germany", "Male", "$32,000.00", "32"], ["France", "Male", "$32,500.00", "33"], ["Australia", "Male", "$66,400.00", "78"]];
const Double = ({ left }) => <S w={20} h={22} s="#222" sw={1.700}><path d={left ? "M9 1L1 11l8 10M18 1l-8 10 8 10" : "M1 1l8 10-8 10M10 1l8 10-8 10"} /></S>;

function WorkArea() {
  return (
    <Work>
      <Rail>
        <RailItem $on><S w={22} s={DARK} sw={1.700}><path d="M1 0v21h21M5 8h3.500v10H5zM11 12h3v6h-3zM16.500 3.500H20V18h-3.500z" /></S></RailItem>
        <RailItem><S w={24} h={22} s="#605e5c" sw={1.700}><path d="M1 1h22v20H1zM1 6h22M1 11h22M1 16h22M8.500 6v15M16 6v15" /></S></RailItem>
        <RailItem><S w={26} s="#605e5c" sw={1.700}><path d="M10 1h15v10H10zM10 4h15M1 9h6M1 9v9h10V9M13 16h12v9H13zM13 19h12M7 9V5h3M7 18v4h6" /></S></RailItem>
      </Rail>
      <Center>
        <CanvasRow>
          <Canvas>
            <Page>
              <BackButton><S w={26} s="#605e5c" sw={2.200}><circle cx="13" cy="13" r="11.500" /><path d="M20 13H7M12.500 7L6.500 13l6 6" /></S></BackButton>
              <Cards>
                <Card $ls={0.85}>{"Country: All\nCountries"}</Card><Card $ls={0.7}>Gender: Male</Card>
                <Card>$164.10K</Card><Card>208</Card>
              </Cards>
              <Table>
                <Head><div>Country<S w={18} h={10}><path d="M0 0h18l-9 10z" fill="#fff" /></S></div><div>Gender</div><div>TotalSales</div><div>Sum of Age</div></Head>
                {rows.map((r, i) => <Row key={i} $alt={i % 2}>{r.map((c, j) => <div key={j}>{c}</div>)}</Row>)}
                <Row $total><div>Total</div><div /><div>$164,100.00</div><div>208</div></Row>
              </Table>
            </Page>
          </Canvas>
          <FiltersPane>
            <Double left />
            <Funnel><S w={17} h={20} s="#222" sw={1.700}><path d="M16 1v18L8 13.500H1v-7h7z" /></S></Funnel>
            <VerticalText>Filters</VerticalText>
          </FiltersPane>
        </CanvasRow>
        <PageTabs>
          <Slot $w={60}><S w={40} h={14} c="#c4c3c1"><path d="M6 0v14L0 7zM34 0v14l6-7z" /></S></Slot>
          {[["Page 3", 114], ["Page 1", 114], ["Page 2", 114], ["Page 4", 114], ["SalesInfo", 132], ["SalesDetails", 156, 1], ["Page 5", 114]].map(([t, w, on]) => (
            <PageTab key={t} $w={w} $on={on} $ls={t[0] === "S" ? -0.2 : -0.1}>{t}{on && <sup>x</sup>}</PageTab>
          ))}
          <AddPage><S w={18} s="#6b6a4d" sw={4}><path d="M9 1v16M1 9h16" /></S></AddPage>
        </PageTabs>
      </Center>
      <Viz>
        <PaneTitle>Visualizations<Double /></PaneTitle>
        <WellRow $h={32}><Label $ls={0.05}>Build visual</Label></WellRow>
        <Modes>
          <Mode $on><S w={36} h={38}><path d="M0 1.500h28" stroke="#555" strokeWidth="2" /><path d="M1 9h34v11H1zM1 25h34v11H1z" fill={YELLOW} stroke="#222" strokeWidth="1.600" strokeDasharray="3 2" /></S></Mode>
          <Mode><S w={38} s="#222" sw={1.700}><path d="M7 36H1V1h15l10 10v4M16 1v12h10" /><path d="M36 14c-1-1-3 1-5 3L19 28l4 4 10-13c2-3 4-4 3-5zM19 28c-5-1-6 3-7 6-1 1-2 1-3 1 4 3 13 3 14-3" fill="#e3e3e1" /></S></Mode>
        </Modes>
        <S w={271} h={12} s="#8f8f88"><path d="M0 11.500h25L36.500 0.500 48 11.500h222" /></S>
        <IconGrid>
          {viz.map((v, i) => <div key={i}>{typeof v === "string" ? <GalleryLetter $pl={v === "R" ? 5 : -1}>{v}</GalleryLetter> : v}</div>)}
        </IconGrid>
        <Wells>
          <WellList>
            <WellRow $h={43} $pt={5}><Label $ls={-0.2}>Values</Label></WellRow>
            <Drop><Label $ls={0}>Add data fields here</Label></Drop>
            <WellRow $h={54}><Label $color="#4a4846" $ls={0.1}>Drill through</Label></WellRow>
            <WellRow $h={22}><Label $ls={0}>Cross-report</Label><Toggle>Off<i /></Toggle></WellRow>
            <WellRow $h={56}><Label $ls={-0.1}>Keep all filters</Label><Toggle $on>On<i /></Toggle></WellRow>
          </WellList>
          <Thumb $w={8} $h={109} $c="#d0d1c9" $r={4} $mt={2} />
        </Wells>
      </Viz>
      <Fields>
        <PaneTitle>Fields<Double /></PaneTitle>
        <FieldSearch><Lens n={23} s="#333" sw={1.500} /><Label $size={19} $color="#555" $ls={-0.1}>Search</Label></FieldSearch>
        <FieldArea>
          <FieldList>
            {fields.map(([t, k], i) => k === "t"
              ? <FieldRow key={i} $table><Chevron /><Slot $w={28}><GridIcon /></Slot><Slot $w={4} /><Label $ls={-0.2}>{t}</Label></FieldRow>
              : <FieldRow key={i}><Check /><FieldIcon>{fieldIcons[k]}</FieldIcon><Label $ls={-0.1}>{t}</Label></FieldRow>)}
          </FieldList>
          <Thumb $w={12} $h={369} $c="#cccccc" $mt={62} />
        </FieldArea>
      </Fields>
    </Work>
  );
}

function StatusBar() {
  return (
    <Status>
      <Label $color="#484644" $ls={-0.1}>Page 6 of 7</Label>
      <Spacer />
      <S w={184} h={18} s="#605e5c" sw={1.800}><path d="M0 10h6" strokeWidth="2.500" /><path d="M14 9h150M89 4v10M173 9h11M178.500 3.500v11" /><path d="M52 1v16" strokeWidth="6" /></S>
      <Slot $w={80} $align="flex-start" $pl={26}><Label $color="#484644" $ls={-0.7}>56%</Label></Slot>
      <Slot $w={40}><S w={24} h={18} s="#605e5c"><path d="M1 1h22v16H1z" /><path d="M5 7V4h4M15 4h4v3M19 11v3h-4M9 14H5v-3" /></S></Slot>
      <Slot $w={306} $align="flex-end"><Label $color="#484644" $ls={0.08}>Update available (click to download)</Label></Slot>
    </Status>
  );
}

/* ---------- taskbar icons ---------- */
const Chrome = () => <S w={36} h={36}><circle cx="18" cy="18" r="18" fill="#34a853" /><path d="M18 9h15.600A18 18 0 0118 36l8-13z" fill="#fbbc04" /><path d="M2.400 9A18 18 0 0118 36l8-13-8-5z" fill="#34a853" /><path d="M2.400 9A18 18 0 0133.600 9L18 18z" fill="#ea4335" /><circle cx="18" cy="18" r="9" fill="#fff" /><circle cx="18" cy="18" r="7" fill="#2f80ed" /></S>;
const Start10 = () => <S w={25} h={25} c="#fff"><path d="M0 4l11-1.500V12H0zM12.500 2L25 0v12H12.500zM0 13.500h11V23L0 21.500zM12.500 13.500H25V25l-12.500-2z" /></S>;
const IE = () => <S w={34} h={34}><path d="M26 24c-3 8-19 8-19-6 0-8 5-11 11-11s11 4 10 12H9" stroke="#4fc3f2" strokeWidth="6" /><path d="M3 33C-2 26 14 3 31 1c4 1 0 6-1 8" stroke="#f3c11c" strokeWidth="3" /></S>;
const Explorer10 = () => <S w={32} h={28}><path d="M0 1h12l3 3h17v22H0z" fill="#fbe08a" /><path d="M0 0h13v5H0z" fill="#f8d14a" /><path d="M6 28V17a2 2 0 012-2h16a2 2 0 012 2v11h-5v-7H11v7z" fill="#2fb0ea" /></S>;
const PowerBi = () => <S w={28} h={36}><rect x="16" y="0" width="12" height="36" rx="1" fill="#e0a30c" /><rect x="8" y="9" width="12" height="27" rx="1" fill="#f2c41d" /><rect x="0" y="18" width="12" height="18" rx="1" fill="#f9e065" /></S>;

function Taskbars() {
  return (
    <>
      <RemoteBar>
        <Slot $w={73}><Start10 /></Slot>
        <Slot $w={70}><Lens n={25} s="#e8e8e8" /></Slot>
        <Slot $w={73}><S w={31} h={22} s="#eee" sw={1.800}><path d="M7 1h17v20H7zM4 3H1v16h3M27 3h3v16h-3" /></S></Slot>
        <Slot $w={80}><IE /></Slot>
        <Slot $w={68}><Chrome /></Slot>
        <Slot $w={77}><Explorer10 /></Slot>
        <AppTile $on><PowerBi /></AppTile>
        <Spacer />
        <Slot $w={34}><S w={18} h={11} s="#eee" sw={1.800}><path d="M1 10l8-9 8 9" /></S></Slot>
        <Slot $w={36}><S w={24} h={22} s="#eee" sw={1.600}><path d="M1 8h4l5-6v18l-5-5H1z" /><circle cx="18" cy="15.500" r="6.500" fill="#d8232f" stroke="none" /><path d="M15.500 13l5 5M20.500 13l-5 5" stroke="#fff" /></S></Slot>
        <Slot $w={40}><S w={24} h={20} s="#eee" sw={1.600}><path d="M8 2h15v12H6M15 14v5M10 19h10M1 1h6v6H1zM4 7v12" /></S></Slot>
        <Clock $w={90} $align="center" $size={17} $lh={27} $ls={-0.3}>2:13 PM<br />9/14/2023</Clock>
        <Slot $w={75} $pl={3} $pt={3}><S w={38} h={34}><path d="M0 0h25v18h-5v5l-6-5H0z" fill="#fff" /><path d="M4 5h16M4 9h16M4 13h11" stroke="#222" strokeWidth="1.500" /><circle cx="24" cy="23" r="12" fill="#2b2b2b" stroke="#888" /><path d="M21 19l4-2.500v13" stroke="#fff" strokeWidth="2" /></S></Slot>
        <Slot $w={8} $align="flex-start"><S w={1} h={61} c="#444"><path d="M0 0h1v61H0z" /></S></Slot>
      </RemoteBar>
      <HostBar>
        <Slot $w={30} />
        <Weather>
          <S w={36} h={32}><defs><linearGradient id="cl" x2="0" y2="1"><stop stopColor="#8fb4f5" /><stop offset="1" stopColor="#dfe9fb" /></linearGradient></defs><circle cx="25" cy="9" r="9" fill="#f58a1a" /><path d="M8 31a8 8 0 01-1-15 9 9 0 0117-2 9 9 0 015 17z" fill="url(#cl)" /></S>
          <WeatherText><div>82°F</div><div>Mostly cloudy</div></WeatherText>
        </Weather>
        <Slot $w={44}><S w={35}><defs><linearGradient id="win" x2="1" y2="1"><stop stopColor="#7fe9fb" /><stop offset="1" stopColor="#0f93f5" /></linearGradient></defs><path d="M0 0h17v17H0zM18 0h17v17H18zM0 18h17v17H0zM18 18h17v17H18z" fill="url(#win)" /></S></Slot>
        <SearchPill>
          <Lens n={23} s="#e4e6ee" /><Slot $w={202} $align="flex-start" $pl={16}><Label $size={19} $color="#d5d7e2" $ls={0}>Search</Label></Slot>
          <Highlight><S w={36} h={28}><path d="M13 5V2a2 2 0 012-2h6a2 2 0 012 2v3" stroke="#3a3030" strokeWidth="3" /><rect y="4" width="36" height="24" rx="2" fill="#b86a05" /><rect y="4" width="36" height="13" rx="2" fill="#ee9207" /><path d="M14 13h8v8h-8z" fill="#f5d410" /><path d="M16.500 15.500h3v3h-3z" fill="#9a6a05" /></S></Highlight>
        </SearchPill>
        <HostApp><S w={36} h={32}><rect x="9" y="0" width="27" height="24" rx="2" fill="#eee" /><rect x="0" y="9" width="27" height="23" rx="2" fill="#5e5e60" /><path d="M9 9h18v15H9z" fill="#a9a9aa" /></S></HostApp>
        <HostApp><S w={36} h={32}><path d="M0 2a2 2 0 012-2h9l4 4h19a2 2 0 012 2v10H0z" fill="#d99b14" /><path d="M0 6h14l3-3h17a2 2 0 012 2v25a2 2 0 01-2 2H2a2 2 0 01-2-2z" fill="#fdcb45" /><path d="M6 32V24a3 3 0 013-3h18a3 3 0 013 3v8z" fill="#1377d0" /><path d="M11 27h14" stroke="#0a4a90" strokeWidth="2" /></S></HostApp>
        <HostApp $run><Chrome /></HostApp>
        <HostApp><S w={36} h={36}><path d="M9 7V2a1 1 0 011-1h15a1 1 0 011 1v5" stroke="#2fb5ee" strokeWidth="2.500" /><path d="M0 5h36v27a4 4 0 01-4 4H4a4 4 0 01-4-4z" fill="#f4f4f4" /><path d="M10 12h7v7h-7z" fill="#f25022" /><path d="M19 12h7v7h-7z" fill="#7fba00" /><path d="M10 21h7v7h-7z" fill="#00a4ef" /><path d="M19 21h7v7h-7z" fill="#ffb900" /></S></HostApp>
        <HostApp $run><S w={42} h={36}><circle cx="18" cy="7" r="6" fill="#7b83eb" /><path d="M10 13h18v12c0 12-18 12-18 0z" fill="#7b83eb" /><path d="M28 14h8v9c0 8-8 8-8 2z" fill="#5059c9" /><rect x="0" y="8" width="18" height="18" rx="2" fill="#4048b5" /><path d="M4.500 12.500h9M9 12.500v9" stroke="#fff" strokeWidth="2.200" /><circle cx="34" cy="6" r="8" fill="#6bb700" stroke="#fff" strokeWidth="1.500" /><path d="M30 6l3 3 5-5.500" stroke="#fff" strokeWidth="2" /></S></HostApp>
        <HostApp $run><S w={35} h={33}><rect x="10" y="0" width="25" height="24" rx="2" fill="#1a86d8" /><path d="M22 6h13v8H22z" fill="#45bdf0" /><path d="M10 32V17l12 7 13-7v13a2 2 0 01-2 2z" fill="#36a9ea" /><rect x="0" y="7" width="19" height="19" rx="2" fill="#0f66bd" /><circle cx="9.500" cy="16.500" r="4.500" stroke="#fff" strokeWidth="2.400" /></S></HostApp>
        <Spacer />
        <Slot $w={36}><S w={18} h={11} s="#eee" sw={1.500}><path d="M1 10l8-9 8 9" /></S></Slot>
        <Slot $w={36}><S w={25} h={16}><path d="M5 16a5 5 0 01-1-9 8 8 0 0114-3 6 6 0 012 12z" fill="#1285dc" /><path d="M4 8a8 8 0 0114-4l-6 9z" fill="#0a62b8" /></S></Slot>
        <Slot $w={38}><S w={24} h={26} s="#eee" sw={1.600}><path d="M1 11C2 1 18-1 22 8M22 1v7h-7M2 24v-7h7M3 18c2 4 5 6 9 6" /><circle cx="18" cy="19" r="6" fill="#f7941d" stroke="none" /></S></Slot>
        <Slot $w={44}><S w={25} h={24} s="#eee" sw={1.600}><path d="M15 3H2v15h17v-5M10 18v5M5 23h12M16 1h7v9h-7zM19.500 10v12" /></S></Slot>
        <Slot $w={32}><S w={24} h={18} s="#eee" sw={1.500}><path d="M1 6h4l5-5v16l-5-5H1zM15 6l7 7M22 6l-7 7" /></S></Slot>
        <Slot $w={40}><S w={26} h={15} s="#eee" sw={1.700}><rect x="1" y="1" width="21" height="13" rx="3" /><path d="M24.500 5v5" strokeWidth="2.500" /><path d="M5.500 4v7" strokeWidth="4" /></S></Slot>
        <Clock $w={94} $align="right" $size={17.300} $lh={23} $ls={-0.3}>2:13 PM<br />9/14/2023</Clock>
        <Count>36</Count>
        <Slot $w={27} />
      </HostBar>
    </>
  );
}

export default function App() {
  return (
    <Screen>
      <Global />
      <Browser />
      <TitleStrip />
      <RibbonArea />
      <WorkArea />
      <StatusBar />
      <Taskbars />
    </Screen>
  );
}
